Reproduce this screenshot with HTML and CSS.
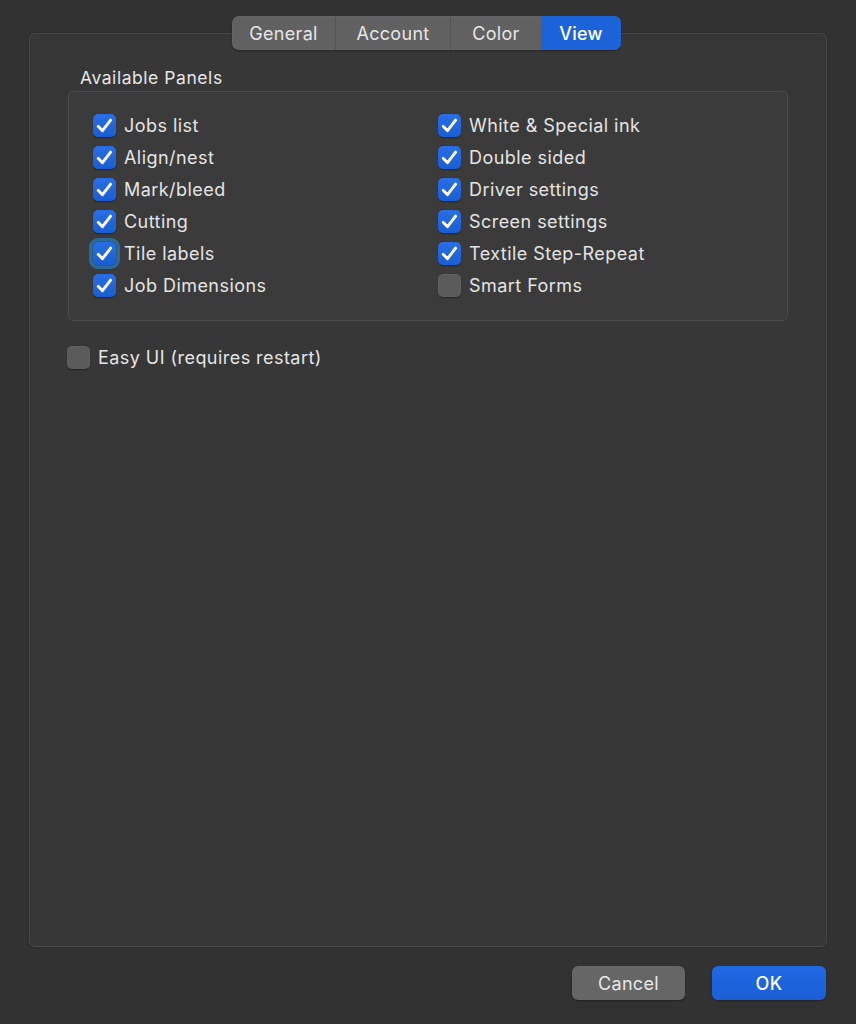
FILE: index.html
```html
<!DOCTYPE html>
<html>
<head>
<meta charset="utf-8">
<link rel="stylesheet" href="styles.css">
</head>
<body>
<div class="window">
  <div class="tabs">
    <div class="tab tab-general">General</div>
    <div class="tab tab-account">Account</div>
    <div class="tab tab-color">Color</div>
    <div class="tab tab-view active">View</div>
  </div>
  <div class="tabbox">
    <div class="group-title">Available Panels</div>
    <div class="group">
      <label class="check"><span class="box on"><svg viewBox="0 0 24 24"><path d="M5.4 12.8 L9.9 17.4 L18.4 6.4"/></svg></span><span class="text">Jobs list</span></label>
      <label class="check"><span class="box on"><svg viewBox="0 0 24 24"><path d="M5.4 12.8 L9.9 17.4 L18.4 6.4"/></svg></span><span class="text">White &amp; Special ink</span></label>
      <label class="check"><span class="box on"><svg viewBox="0 0 24 24"><path d="M5.4 12.8 L9.9 17.4 L18.4 6.4"/></svg></span><span class="text">Align/nest</span></label>
      <label class="check"><span class="box on"><svg viewBox="0 0 24 24"><path d="M5.4 12.8 L9.9 17.4 L18.4 6.4"/></svg></span><span class="text">Double sided</span></label>
      <label class="check"><span class="box on"><svg viewBox="0 0 24 24"><path d="M5.4 12.8 L9.9 17.4 L18.4 6.4"/></svg></span><span class="text">Mark/bleed</span></label>
      <label class="check"><span class="box on"><svg viewBox="0 0 24 24"><path d="M5.4 12.8 L9.9 17.4 L18.4 6.4"/></svg></span><span class="text">Driver settings</span></label>
      <label class="check"><span class="box on"><svg viewBox="0 0 24 24"><path d="M5.4 12.8 L9.9 17.4 L18.4 6.4"/></svg></span><span class="text">Cutting</span></label>
      <label class="check"><span class="box on"><svg viewBox="0 0 24 24"><path d="M5.4 12.8 L9.9 17.4 L18.4 6.4"/></svg></span><span class="text">Screen settings</span></label>
      <label class="check"><span class="box on focus"><svg viewBox="0 0 24 24"><path d="M5.4 12.8 L9.9 17.4 L18.4 6.4"/></svg></span><span class="text">Tile labels</span></label>
      <label class="check"><span class="box on"><svg viewBox="0 0 24 24"><path d="M5.4 12.8 L9.9 17.4 L18.4 6.4"/></svg></span><span class="text">Textile Step-Repeat</span></label>
      <label class="check"><span class="box on"><svg viewBox="0 0 24 24"><path d="M5.4 12.8 L9.9 17.4 L18.4 6.4"/></svg></span><span class="text">Job Dimensions</span></label>
      <label class="check"><span class="box off"></span><span class="text">Smart Forms</span></label>
    </div>
    <label class="check easy"><span class="box off"></span><span class="text">Easy UI (requires restart)</span></label>
  </div>
  <div class="buttons">
    <div class="btn cancel">Cancel</div>
    <div class="btn ok">OK</div>
  </div>
</div>
</body>
</html>
```
FILE: styles.css
```css
html, body {
  margin: 0;
  padding: 0;
  background: #323232;
}
body {
  font-family: "Inter", "Noto Sans", "Liberation Sans", sans-serif;
  color: #e4e4e4;
  -webkit-font-smoothing: antialiased;
}
.window {
  height: 1024px;
  box-sizing: border-box;
  display: flex;
  flex-direction: column;
  padding: 16px 29px 24px 29px;
}
.tabs {
  align-self: center;
  display: flex;
  height: 34px;
  border-radius: 7px;
  background: #616161;
  box-shadow: 0 1px 2px rgba(0,0,0,0.35), inset 0 0 0 0.5px rgba(255,255,255,0.06);
  position: relative;
  z-index: 1;
  overflow: hidden;
  margin-left: 5px;
  margin-right: 8px;
}
.tab {
  display: flex;
  align-items: center;
  justify-content: center;
  font-size: 18px;
  letter-spacing: 0.3px;
  color: #e6e6e6;
  border-left: 1px solid #545454;
}
.tab:first-child { border-left: none; }
.tab-general { width: 103px; }
.tab-account { width: 114px; }
.tab-color { width: 90px; }
.tab-view { width: 80px; }
.tab.active {
  background: #1c63d9;
  color: #ffffff;
  font-weight: 500;
  border-left: none;
}
.tabbox {
  flex: 1;
  margin-top: -17px;
  background: #373737;
  border: 1px solid #474747;
  border-radius: 6px;
  padding: 33px 38px 0 38px;
  box-shadow: 0 0 2px rgba(0,0,0,0.25);
}
.group-title {
  font-size: 17.5px;
  letter-spacing: 0.55px;
  line-height: 22px;
  margin-left: 12px;
  color: #e6e6e6;
}
.group {
  margin-top: 2px;
  height: 230px;
  box-sizing: border-box;
  background: #3b3b3b;
  border: 1px solid #4b4b4b;
  border-radius: 5px;
  padding: 17px 24px 0 24px;
  display: grid;
  grid-template-columns: 345px 1fr;
  grid-auto-rows: 32px;
}
.check {
  display: flex;
  align-items: center;
  gap: 8px;
  height: 32px;
}
.box {
  width: 23px;
  height: 23px;
  box-sizing: border-box;
  border-radius: 5px;
  display: flex;
  align-items: center;
  justify-content: center;
  flex: none;
}
.box.on {
  background: linear-gradient(#2a6ee4, #1a5ed2);
  box-shadow: 0 0.5px 1px rgba(0,0,0,0.4);
}
.box.off {
  background: #5b5b5b;
  box-shadow: inset 0 0 0 0.5px rgba(255,255,255,0.08), 0 0.5px 1px rgba(0,0,0,0.4);
}
.box.focus {
  box-shadow: 0 0 0 1px #2a5c86, 0 0 0 4px #2e6a96;
}
.box svg {
  width: 23px;
  height: 23px;
}
.box svg path {
  fill: none;
  stroke: #ffffff;
  stroke-width: 3;
  stroke-linecap: round;
  stroke-linejoin: round;
}
.text {
  font-size: 18px;
  letter-spacing: 0.45px;
  color: #e4e4e4;
}
.easy {
  margin-top: 20px;
  margin-left: -1px;
}
.buttons {
  display: flex;
  justify-content: flex-end;
  gap: 27px;
  margin-top: 19px;
  padding-right: 1px;
}
.btn {
  height: 34px;
  border-radius: 6px;
  display: flex;
  align-items: center;
  justify-content: center;
  font-size: 18px;
  letter-spacing: 0.3px;
  box-shadow: 0 1px 2px rgba(0,0,0,0.35);
}
.cancel {
  width: 113px;
  background: #666666;
  color: #e8e8e8;
}
.ok {
  width: 114px;
  background: linear-gradient(#1f69e2, #1a5fd6);
  color: #ffffff;
  font-weight: 500;
}
```
